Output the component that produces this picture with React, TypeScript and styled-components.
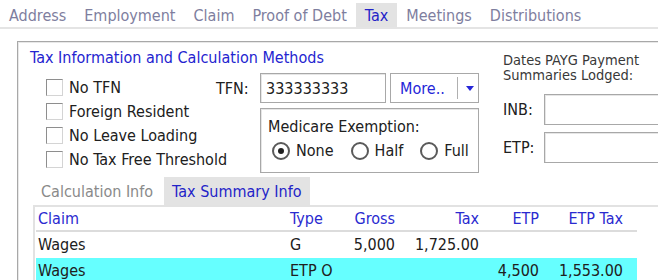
import React from "react";
import styled, { createGlobalStyle } from "styled-components";

const Global = createGlobalStyle`
  html, body { margin: 0; padding: 0; background: #ffffff; overflow: hidden; }
  body {
    font-family: "DejaVu Sans Condensed", "DejaVu Sans", sans-serif;
    font-size: 16px;
    color: #202020;
  }
`;

const Page = styled.div`
  width: 658px;
  height: 280px;
  overflow: hidden;
  position: relative;
`;

const TabBar = styled.div`
  display: flex;
  height: 29px;
  padding-top: 3px;
  box-sizing: border-box;
  border-bottom: 2px solid #e4e4e4;
  align-items: stretch;
`;

const Tab = styled.div<{ $active?: boolean }>`
  padding: 0 9px;
  display: flex;
  align-items: center;
  background: ${(p) => (p.$active ? "#e3e3e3" : "transparent")};
  color: ${(p) => (p.$active ? "#2323c8" : "#7e7e9e")};
  white-space: nowrap;
`;

const Panel = styled.div`
  margin: 12px 0 0 17px;
  width: 720px;
  height: 300px;
  border: 1px solid #a8a8a8;
  box-shadow: inset 1px 1px 0 #e8e8e8;
  box-sizing: border-box;
  padding: 6px 0 0 12px;
`;

const Title = styled.div`
  color: #2424d0;
  height: 20px;
  line-height: 20px;
`;

const TopRow = styled.div`
  display: flex;
  margin-top: 5px;
`;

const CheckCol = styled.div`
  display: flex;
  flex-direction: column;
  padding: 2px 0 0 16px;
  width: 170px;
`;

const CheckRow = styled.label`
  display: flex;
  align-items: center;
  height: 24px;
  gap: 6px;
  white-space: nowrap;
`;

const CheckBox = styled.span`
  width: 15px;
  height: 15px;
  border: 1px solid #8e8e8e;
  border-right-color: #d4d4d4;
  border-bottom-color: #d4d4d4;
  background: #fff;
  flex: none;
`;

const MidCol = styled.div`
  display: grid;
  grid-template-columns: 44px 126px 93px;
  align-items: center;
  align-content: start;
`;

const FieldLabel = styled.div`
  white-space: nowrap;
`;

const Input = styled.div<{ $h?: number }>`
  height: ${(p) => p.$h ?? 30}px;
  box-sizing: border-box;
  border: 1px solid #a8a8a8;
  box-shadow: inset 1px 1px 0 #e6e6e6;
  padding-left: 5px;
  display: flex;
  align-items: center;
  background: #fff;
`;

const MoreButton = styled.div`
  margin-left: 4px;
  height: 30px;
  box-sizing: border-box;
  border: 1px solid #a8a8a8;
  display: flex;
  align-items: center;
  color: #2626d8;
`;

const MoreText = styled.span`
  padding-left: 9px;
  width: 57px;
`;

const Split = styled.span`
  width: 1px;
  height: 22px;
  background: #b0b0b0;
`;

const Arrow = styled.span`
  width: 0;
  height: 0;
  margin-left: 8px;
  border-left: 4px solid transparent;
  border-right: 4px solid transparent;
  border-top: 5px solid #2626d8;
`;

const Medicare = styled.div`
  grid-column: 2 / span 2;
  margin-top: 5px;
  height: 65px;
  box-sizing: border-box;
  border: 1px solid #a8a8a8;
  box-shadow: inset 1px 1px 0 #e6e6e6;
  padding: 8px 0 0 7px;
`;

const RadioRow = styled.div`
  display: flex;
  align-items: center;
  margin-top: 5px;
  padding-left: 4px;
`;

const RadioItem = styled.label`
  display: flex;
  align-items: center;
  gap: 6px;
  margin-right: 17px;
`;

const Radio = styled.span<{ $on?: boolean }>`
  width: 14px;
  height: 14px;
  border-radius: 50%;
  border: 2px solid #5a5a5a;
  box-sizing: content-box;
  display: flex;
  align-items: center;
  justify-content: center;
  &::after {
    content: "";
    width: 6px;
    height: 6px;
    border-radius: 50%;
    background: ${(p) => (p.$on ? "#202020" : "transparent")};
  }
`;

const DatesCol = styled.div`
  margin-left: 24px;
  display: grid;
  grid-template-columns: 41px 130px;
  row-gap: 7px;
  align-items: center;
  align-content: start;
  margin-top: -20px;
`;

const SmallNote = styled.div`
  grid-column: 1 / span 2;
  font-size: 14.5px;
  line-height: 15px;
  color: #383838;
  margin-bottom: 4px;
  white-space: nowrap;
`;

const SubTabs = styled.div`
  display: flex;
  margin: 4px 0 0 3px;
  height: 28px;
`;

const SubTab = styled.div<{ $active?: boolean }>`
  padding: 0 8px;
  display: flex;
  align-items: center;
  margin-right: 3px;
  background: ${(p) => (p.$active ? "#e3e3e3" : "transparent")};
  color: ${(p) => (p.$active ? "#2323c8" : "#8a8a8a")};
`;

const Grid = styled.div`
  margin-left: 3px;
  border-top: 2px solid #e2e2e2;
  border-left: 2px solid #e2e2e2;
  padding-left: 1px;
  display: grid;
  grid-template-columns: 250px 65px 48px 84px 60px 84px 10px;
  grid-auto-rows: 25px;
`;

const HeaderRow = styled.div`
  display: contents;
`;

const Cell = styled.div<{ $right?: boolean; $head?: boolean; $hl?: boolean; $pl?: number }>`
  display: flex;
  align-items: center;
  justify-content: ${(p) => (p.$right ? "flex-end" : "flex-start")};
  padding-left: ${(p) => p.$pl ?? 4}px;
  padding-right: ${(p) => (p.$right ? 4 : 0)}px;
  color: ${(p) => (p.$head ? "#2a2ad0" : "#202020")};
  background: ${(p) => (p.$hl ? "#66ffff" : "transparent")};
  border-bottom: ${(p) => (p.$head ? "2px solid #dcdcdc" : "none")};
  margin-top: ${(p) => (p.$hl ? "1px" : "0")};
  white-space: nowrap;
`;

const cols = ["Claim", "Type", "Gross", "Tax", "ETP", "ETP Tax", ""];
const rightCols = [false, false, true, true, true, true, false];
const rows = [
  ["Wages", "G", "5,000", "1,725.00", "", "", ""],
  ["Wages", "ETP O", "", "", "4,500", "1,553.00", ""],
];

export default function App() {
  return (
    <Page>
      <Global />
      <TabBar>
        {["Address", "Employment", "Claim", "Proof of Debt", "Tax", "Meetings", "Distributions"].map((t) => (
          <Tab key={t} $active={t === "Tax"}>{t}</Tab>
        ))}
      </TabBar>
      <Panel>
        <Title>Tax Information and Calculation Methods</Title>
        <TopRow>
          <CheckCol>
            {["No TFN", "Foreign Resident", "No Leave Loading", "No Tax Free Threshold"].map((c) => (
              <CheckRow key={c}>
                <CheckBox />
                {c}
              </CheckRow>
            ))}
          </CheckCol>
          <MidCol>
            <FieldLabel>TFN:</FieldLabel>
            <Input>333333333</Input>
            <MoreButton>
              <MoreText>More..</MoreText>
              <Split />
              <Arrow />
            </MoreButton>
            <div />
            <Medicare>
              <div>Medicare Exemption:</div>
              <RadioRow>
                <RadioItem><Radio $on />None</RadioItem>
                <RadioItem><Radio />Half</RadioItem>
                <RadioItem><Radio />Full</RadioItem>
              </RadioRow>
            </Medicare>
          </MidCol>
          <DatesCol>
            <SmallNote>Dates PAYG Payment<br />Summaries Lodged:</SmallNote>
            <FieldLabel>INB:</FieldLabel>
            <Input $h={31} />
            <FieldLabel>ETP:</FieldLabel>
            <Input $h={31} />
          </DatesCol>
        </TopRow>
        <SubTabs>
          <SubTab>Calculation Info</SubTab>
          <SubTab $active>Tax Summary Info</SubTab>
        </SubTabs>
        <Grid>
          <HeaderRow>
            {cols.map((c, i) => (
              <Cell key={i} $head $right={rightCols[i]} $pl={i === 0 ? 2 : 4}>{c}</Cell>
            ))}
          </HeaderRow>
          {rows.map((r, ri) =>
            r.map((v, i) => (
              <Cell key={`${ri}-${i}`} $right={rightCols[i]} $hl={ri === 1} $pl={i === 0 ? 2 : 4}>{v}</Cell>
            ))
          )}
        </Grid>
      </Panel>
    </Page>
  );
}
